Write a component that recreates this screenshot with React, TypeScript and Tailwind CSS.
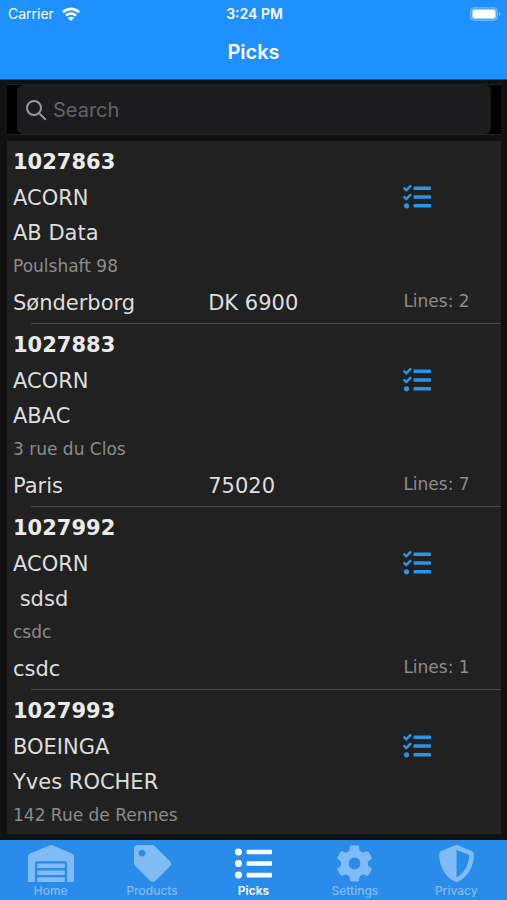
import { useState } from "react";
import type { ComponentType } from "react";
import { FaListUl, FaShieldAlt, FaTag, FaTasks, FaWarehouse } from "react-icons/fa";

interface Pick {
  id: string;
  company: string;
  customer: string;
  address: string;
  city?: string;
  zip?: string;
  lines?: number;
}

const picks: Pick[] = [
  { id: "1027863", company: "ACORN", customer: "AB Data", address: "Poulshaft 98", city: "Sønderborg", zip: "DK 6900", lines: 2 },
  { id: "1027883", company: "ACORN", customer: "ABAC", address: "3 rue du Clos", city: "Paris", zip: "75020", lines: 7 },
  { id: "1027992", company: "ACORN", customer: " sdsd", address: "csdc", city: "csdc", lines: 1 },
  { id: "1027993", company: "BOEINGA", customer: "Yves ROCHER", address: "142 Rue de Rennes" },
];

const toothAngles = [0, 60, 120, 180, 240, 300];

function GearIcon({ className }: { className?: string }) {
  return (
    <svg viewBox="0 0 36 36" className={className} fill="currentColor">
      <circle cx="18" cy="18" r="9.5" fill="none" stroke="currentColor" strokeWidth="7.5" />
      {toothAngles.map((angle) => (
        <path
          key={angle}
          d="M14.6 .6h6.8q.8 0 .9.8l.9 5.4q-.2 1.2-1.2 1.2h-8q-1 0-1.2-1.2l.9-5.400q.1-.8.9-.8z"
          transform={`rotate(${angle} 18 18)`}
        />
      ))}
    </svg>
  );
}

const tabs: { name: string; icon: ComponentType<{ className?: string }>; size: string }[] = [
  { name: "Home", icon: FaWarehouse, size: "h-[37px] w-[46px]" },
  { name: "Products", icon: FaTag, size: "size-[37px]" },
  { name: "Picks", icon: FaListUl, size: "size-[37px]" },
  { name: "Settings", icon: GearIcon, size: "size-[37px]" },
  { name: "Privacy", icon: FaShieldAlt, size: "size-[37px]" },
];

function StatusBar() {
  return (
    <div className="grid h-7 grid-cols-3 items-center pr-1.5 pl-2 text-sm">
      <div className="flex items-center gap-2">
        <span>Carrier</span>
        <svg viewBox="0 0 18 14" className="h-3.5 w-[18px]" fill="none" stroke="currentColor" strokeWidth="2.6">
          <path d="M1 5.2C5.6.8 12.4.8 17 5.2" />
          <path d="M4 8.6c2.9-2.6 7.1-2.6 10 0" />
          <path d="M9 14 5.9 10.9c1.8-1.5 4.4-1.5 6.2 0z" fill="currentColor" stroke="none" />
        </svg>
      </div>
      <span className="text-center font-semibold">3:24 PM</span>
      <svg viewBox="0 0 31 14" className="h-3.5 w-[31px] justify-self-end">
        <rect x="0.5" y="0.5" width="27" height="13" rx="4" fill="white" fillOpacity="0.2" stroke="white" strokeOpacity="0.25" />
        <rect x="2.5" y="2.5" width="23" height="9" rx="2" fill="white" />
        <path d="M29 5c1.6.6 1.6 3.4 0 4z" fill="white" fillOpacity="0.5" />
      </svg>
    </div>
  );
}

function PickRow({ pick }: { pick: Pick }) {
  return (
    <li className="relative grid h-[183px] shrink-0 grid-cols-[2fr_2fr_1fr] grid-rows-[36px_35px_35px_32px_41px] items-center whitespace-pre pt-1 pl-1.5 text-[21px] text-[#dedede] after:absolute after:right-0 after:bottom-0 after:left-6 after:h-px after:bg-[#4a4a4a]">
      <h2 className="col-span-3 font-bold text-[#ebebeb]">{pick.id}</h2>
      <span className="col-span-2">{pick.company}</span>
      <button type="button" aria-label={`Open ${pick.id}`} className="pb-1 text-[#2b93e8]">
        <FaTasks className="size-7" />
      </button>
      <span className="col-span-3">{pick.customer}</span>
      <span className="col-span-3 text-[17px] text-[#8c8c8c]">{pick.address}</span>
      <span>{pick.city}</span>
      <span>{pick.zip}</span>
      {pick.lines !== undefined && (
        <span className="pb-1 text-[17px] text-[#8c8c8c]">Lines: {pick.lines}</span>
      )}
    </li>
  );
}

export default function App() {
  const [query, setQuery] = useState("");
  const [activeTab, setActiveTab] = useState("Picks");

  const filteredPicks = picks.filter((pick) =>
    `${pick.id} ${pick.company} ${pick.customer}`.toLowerCase().includes(query.toLowerCase())
  );

  return (
    <div className="flex h-screen flex-col bg-[#111111] font-['Inter','Liberation_Sans',sans-serif]">
      <header className="border-b border-[#0f4a8a] bg-[#1e90ff] text-white">
        <StatusBar />
        <h1 className="h-[51px] pt-2 text-center text-xl leading-8 font-semibold">Picks</h1>
      </header>

      <main className="flex min-h-0 flex-1 flex-col pt-1 pr-1.5 pb-1.5 pl-[7px]">
        <div className="mb-1.5 border-y border-[#222224] bg-black px-2.5">
          <label className="flex h-[49px] items-center gap-1.5 rounded-md bg-[#1c1c1e] px-2 text-[#98989d]">
            <svg viewBox="0 0 22 22" className="size-[22px]" fill="none" stroke="currentColor" strokeWidth="2" strokeLinecap="round">
              <circle cx="9" cy="9" r="7" />
              <path d="m14.2 14.2 6 6" />
            </svg>
            <input
              type="text"
              aria-label="Search"
              placeholder="Search"
              value={query}
              onChange={(e) => setQuery(e.target.value)}
              className="min-w-0 flex-1 bg-transparent text-xl text-white outline-none placeholder:text-[#636366]"
            />
          </label>
        </div>

        <ul className="flex min-h-0 flex-1 flex-col overflow-y-auto bg-[#212121] font-['DejaVu_Sans',sans-serif] [scrollbar-width:none]">
          {filteredPicks.map((pick) => (
            <PickRow key={pick.id} pick={pick} />
          ))}
        </ul>
      </main>

      <nav className="grid h-[60px] grid-cols-5 bg-[#2a8cea]">
        {tabs.map(({ name, icon: Icon, size }) => (
          <button
            key={name}
            type="button"
            onClick={() => setActiveTab(name)}
            className={
              activeTab === name
                ? "flex flex-col items-center gap-px pt-[5px] text-xs font-semibold text-white"
                : "flex flex-col items-center gap-px pt-[5px] text-xs font-medium text-[#80bbf5]"
            }
          >
            <Icon className={size} />
            <span>{name}</span>
          </button>
        ))}
      </nav>
    </div>
  );
}
